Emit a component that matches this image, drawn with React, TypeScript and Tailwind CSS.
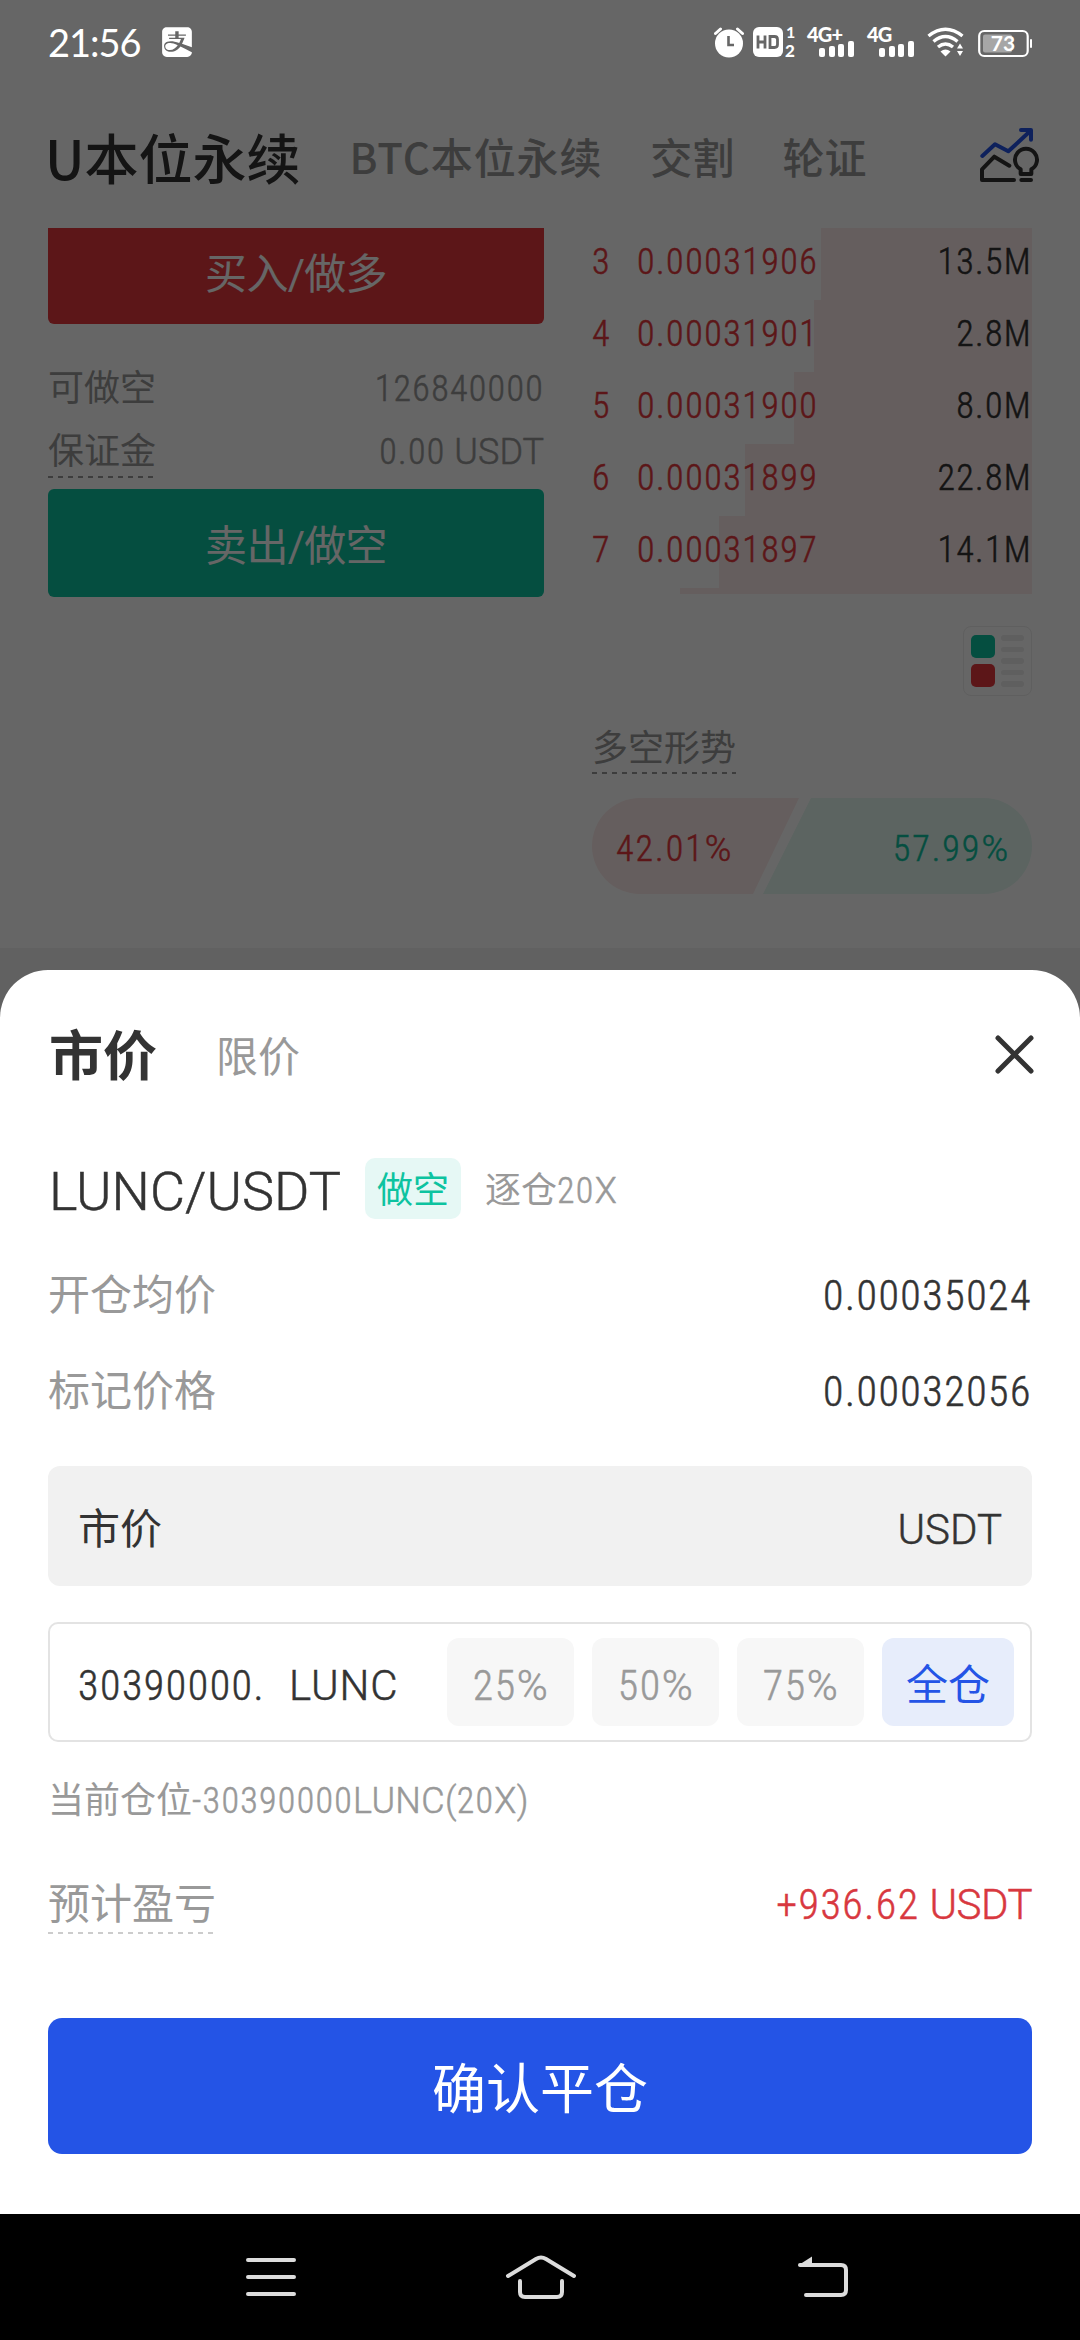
import type { ReactNode } from "react";
import { FaAlipay } from "react-icons/fa";

const asks = [
  { level: 3, price: "0.00031906", amount: "13.5M", depth: 211 },
  { level: 4, price: "0.00031901", amount: "2.8M", depth: 218 },
  { level: 5, price: "0.00031900", amount: "8.0M", depth: 238 },
  { level: 6, price: "0.00031899", amount: "22.8M", depth: 287 },
  { level: 7, price: "0.00031897", amount: "14.1M", depth: 313 },
];

const percents = ["25%", "50%", "75%"];

const latin = "font-light [-webkit-text-stroke:0.5px]";
const digits = "font-light [font-stretch:75%] tracking-[0.036em] [-webkit-text-stroke:0.5px]";

// narrow figures, normal width letters
function Num({ children }: { children: string }) {
  const runs = children.match(/[\d.+-]+|[^\d.+-]+/g) || [];
  return (
    <>
      {runs.map((run, i) => (
        <span key={i} className={/\d/.test(run) ? digits : latin}>{run}</span>
      ))}
    </>
  );
}

function DashedLabel({ children, line }: { children: ReactNode; line: string }) {
  return (
    <div className="flex flex-col">
      <span>{children}</span>
      <span className={`h-[2px] ${line}`} />
    </div>
  );
}

function SignalIcon({ label }: { label: string }) {
  return (
    <svg width="48" height="32" viewBox="0 0 48 32" fill="#fff" className="overflow-visible">
      <text x="0" y="15.5" fontSize="20" fontWeight="900" fontFamily="Lato" letterSpacing="-0.8">{label}</text>
      <rect x="12" y="22" width="6" height="9" rx="2" />
      <rect x="22" y="20" width="6" height="11" rx="2" />
      <rect x="31" y="18" width="6" height="13" rx="2" />
      <rect x="41" y="15" width="6" height="16" rx="2" />
    </svg>
  );
}

function StatusBar() {
  return (
    <div className="absolute inset-x-0 top-0 h-[84px] flex items-center justify-between pl-12 pr-[48px] text-white">
      <div className="flex items-center">
        <span className="w-[114px] font-[Lato] text-[38px] leading-[48px] tracking-[-1px]">21:56</span>
        <FaAlipay className="w-[30px] h-[34px]" />
      </div>
      <div className="flex items-center">
        <svg width="30" height="32" viewBox="0 0 30 32" className="mr-[9px]">
          <circle cx="15" cy="17.5" r="14" fill="#fff" />
          <path d="M1.5 7.5L6.5 3M28.5 7.5L23.5 3" stroke="#fff" strokeWidth="3" strokeLinecap="round" />
          <path d="M14.5 10V19H20" stroke="#666" strokeWidth="2.6" fill="none" />
        </svg>
        <svg width="44" height="32" viewBox="0 0 44 32" className="mr-[10px] overflow-visible">
          <rect x="0" y="1" width="30" height="30" rx="6" fill="#fff" />
          <path d="M5 9.5V22.5M12 9.5V22.5M5 16H12M17 10.5H21.5Q24.5 10.5 24.5 13.5V18.5Q24.5 21.5 21.5 21.5H17Z" stroke="#666" strokeWidth="2.8" fill="none" />
          <text x="33" y="12" fontSize="16" fontWeight="700" fontFamily="Lato" fill="#fff">1</text>
          <text x="32" y="31" fontSize="17" fontWeight="900" fontFamily="Lato" fill="#fff">2</text>
        </svg>
        <div className="mr-[12px] flex"><SignalIcon label="4G+" /></div>
        <div className="mr-[12px] flex"><SignalIcon label="4G" /></div>
        <svg width="38" height="32" viewBox="0 0 38 32" fill="none" stroke="#fff" strokeWidth="3.4" className="mr-[13px]">
          <path d="M1.5 10Q18.5 -3.5 35.5 10" />
          <path d="M6.5 15.5Q18.5 5.5 30.5 15.5" />
          <path d="M11 21Q18.5 15 26 21" />
          <path d="M13.5 25.5Q18.5 21.5 23.5 25.5L18.5 30.5Z" fill="#fff" stroke="none" />
          <path d="M30 22.5L33 17.5L36 22.5ZM30 25L33 30L36 25Z" fill="#fff" stroke="none" />
        </svg>
        <svg width="54" height="32" viewBox="0 0 54 32">
          <rect x="1.2" y="5" width="48.5" height="25" rx="5" fill="none" stroke="#fff" strokeWidth="2.2" />
          <rect x="5" y="8.5" width="29" height="18" rx="2" fill="#a6a6a6" />
          <rect x="52" y="13" width="2" height="9" rx="1" fill="#fff" />
          <text x="25" y="25" textAnchor="middle" fontSize="21" fontWeight="700" fontFamily="Lato" fill="#fff">73</text>
        </svg>
      </div>
    </div>
  );
}

function TrendIcon() {
  return (
    <svg width="64" height="58" viewBox="891 378 192 174" fill="none" strokeWidth="12" strokeLinecap="round" strokeLinejoin="round">
      <path d="M907 468L945 433L985 454L1050 394M1023 390H1053V419" stroke="#2454e6" />
      <path d="M988 497L943 470L906 508V540H1002M1024 540H1053" stroke="#333" />
      <path d="M1022 522V508A33 33 0 1 1 1054 508V522Z" stroke="#333" />
    </svg>
  );
}

function TradePage() {
  return (
    <div className="h-[2214px] bg-white">
      <div className="h-[228px] pt-[107px] pl-[45px] pr-[39px]">
        <div className="flex items-center h-[100px] gap-12 font-['Noto_Sans_CJK_SC',sans-serif] font-medium text-[42px] leading-[60px] text-[#999]">
          <span className="text-[54px] leading-[80px] text-[#333]">U本位永续</span>
          <span className="ml-[1px] mt-[-2px] tracking-[0.9px]">BTC本位永续</span>
          <span className="mt-[-2px]">交割</span>
          <span className="mt-[-2px]">轮证</span>
          <div className="ml-auto mt-[-5px]"><TrendIcon /></div>
        </div>
      </div>

      <div className="flex justify-between px-12 h-[720px]">
        <div className="w-[496px]">
          <div className="h-[96px] rounded-b-md bg-[#e6393e] text-white text-[42px] leading-[94px] tracking-[-0.7px] text-center">买入/做多</div>
          <div className="flex justify-between h-[63px] mt-[34px] text-[36px] leading-[63px] text-[#999]">
            <span>可做空</span>
            <span><Num>126840000</Num></span>
          </div>
          <div className="flex justify-between h-[68px] text-[36px] leading-[47px] text-[#999]">
            <div className="pt-[8px]">
              <DashedLabel line="bg-[repeating-linear-gradient(90deg,#999_0_5px,transparent_5px_10px)]">保证金</DashedLabel>
            </div>
            <span className="pt-[8px]"><Num>0.00 USDT</Num></span>
          </div>
          <div className="h-[108px] rounded-md bg-[#0dc3a0] text-white text-[42px] leading-[115px] tracking-[-0.7px] text-center">卖出/做空</div>
        </div>

        <div className="w-[440px]">
          {asks.map((ask) => (
            <div key={ask.level} className="relative h-[72px]">
              <div className="absolute right-0 top-0 h-[72px] bg-[#fdebea]" style={{ width: ask.depth }} />
              <div className={`relative flex text-[36px] leading-[68px] text-[#e6393e] ${digits}`}>
                <span className="w-[45px]">{ask.level}</span>
                <span className="tracking-[1.5px]">{ask.price}</span>
                <span className="ml-auto text-[#333]">{ask.amount}</span>
              </div>
            </div>
          ))}
          <div className="ml-auto w-[352px] h-[6px] bg-[#fdebea]" />

          <div className="ml-auto mt-[32px] w-[69px] h-[70px] rounded-lg border border-[#ededed] flex justify-between pl-[7px] pr-[7px] py-[8px]">
            <div className="flex flex-col gap-[6px]">
              <div className="w-[24px] h-[24px] rounded-[5px] bg-[#0dc3a0]" />
              <div className="w-[24px] h-[24px] rounded-[5px] bg-[#e6393e]" />
            </div>
            <div className="flex flex-col gap-[6px]">
              {[0, 1, 2, 3, 4].map((i) => (
                <div key={i} className="w-[23px] h-[6px] rounded-sm bg-[#ededed]" />
              ))}
            </div>
          </div>

          <div className="flex mt-[30px] h-[72px] text-[36px] leading-[46px] text-[#999]">
            <DashedLabel line="bg-[repeating-linear-gradient(90deg,#999_0_5px,transparent_5px_10px)]">
              多空形势
            </DashedLabel>
          </div>
          <div className="relative h-[96px] text-[36px] leading-[102px]">
            <svg className="absolute inset-0" width="440" height="96" viewBox="0 0 440 96">
              <path d="M48 0H207L161 96H48A48 48 0 0 1 48 0Z" fill="#fdebea" />
              <path d="M219 0H392A48 48 0 0 1 392 96H171Z" fill="#e6faf3" />
            </svg>
            <div className={`relative flex justify-between px-6 ${latin}`}>
              <span className="text-[#e6393e]"><span className="[font-stretch:75%] tracking-[2px]">42.01</span>%</span>
              <span className="text-[#0dc3a0]"><span className="[font-stretch:75%] tracking-[2px]">57.99</span>%</span>
            </div>
          </div>
        </div>
      </div>
      <div className="h-[60px] bg-[#f3f3f3]" />
    </div>
  );
}

function InfoRow({ label, value }: { label: string; value: string }) {
  return (
    <div className="flex justify-between h-[96px] text-[42px] leading-[98px]">
      <span className="text-[#999]">{label}</span>
      <span className="text-[#333]"><Num>{value}</Num></span>
    </div>
  );
}

function CloseSheet() {
  return (
    <div className="absolute inset-x-0 top-[970px] h-[1244px] rounded-t-[48px] bg-white px-12">
      <div className="flex items-center h-[176px]">
        <span className="ml-[1px] text-[54px] leading-[80px] font-bold text-[#333]">市价</span>
        <span className="ml-[59px] text-[42px] leading-[60px] text-[#999]">限价</span>
        <svg className="ml-auto mr-[-2px] mb-[7px]" width="39" height="39" viewBox="0 0 39 39" stroke="#333" strokeWidth="5" strokeLinecap="round">
          <path d="M3 3L36 36M36 3L3 36" />
        </svg>
      </div>

      <div className="flex items-center h-[92px]">
        <span className="ml-[1px] w-[293px] text-[54px] leading-[80px] text-[#333]"><Num>LUNC/USDT</Num></span>
        <span className="ml-[23px] mb-[8px] w-[96px] h-[61px] rounded-[10px] bg-[#e6f8f5] text-[36px] leading-[66px] text-center text-[#0dc3a0]">做空</span>
        <span className="ml-6 mb-[2px] text-[36px] leading-[60px] text-[#999]">
          逐仓<Num>20X</Num>
        </span>
      </div>

      <div className="mt-[9px]">
        <InfoRow label="开仓均价" value="0.00035024" />
        <InfoRow label="标记价格" value="0.00032056" />
      </div>

      <div className="flex justify-between mt-[27px] h-[120px] px-[30px] rounded-xl bg-[#f1f1f1] text-[42px] leading-[128px] text-[#333]">
        <span>市价</span>
        <span><Num>USDT</Num></span>
      </div>

      <div className="flex items-center mt-9 h-[120px] pl-[28px] pr-[16px] rounded-[10px] border-2 border-[#e3e3e3] text-[42px] leading-[88px] text-[#333]">
        <span className="w-[183px] overflow-hidden whitespace-nowrap pt-[7px]"><Num>30390000.</Num></span>
        <span className="ml-[28px] tracking-[0.9px] pt-[7px]"><Num>LUNC</Num></span>
        <div className="ml-auto flex gap-[18px] text-center">
          {percents.map((p) => (
            <div key={p} className="w-[127px] h-[88px] rounded-xl bg-[#f7f7f7] leading-[96px] tracking-[0.5px] text-[#999]"><Num>{p}</Num></div>
          ))}
          <div className="w-[132px] h-[88px] rounded-xl bg-[#e7edfb] leading-[96px] text-[#2454e6]">全仓</div>
        </div>
      </div>

      <div className="mt-[23px] h-[72px] text-[36px] leading-[72px] text-[#999]">
        当前仓位<span className="tracking-[0.3px]"><Num>-30390000LUNC(20X)</Num></span>
      </div>

      <div className="flex justify-between mt-[41px] h-[56px] text-[42px] leading-[54px]">
        <div className="text-[#999]">
          <DashedLabel line="bg-[repeating-linear-gradient(90deg,#ccc_0_5px,transparent_5px_10px)]">预计盈亏</DashedLabel>
        </div>
        <span className="tracking-[-0.5px] text-[#d8383f]"><Num>+936.62 USDT</Num></span>
      </div>

      <button className="mt-[84px] w-full h-[136px] rounded-[14px] bg-[#2454e6] pt-[9px] text-white text-[54px] leading-[127px]">确认平仓</button>
    </div>
  );
}

function NavBar() {
  return (
    <div className="relative flex items-center h-[126px] bg-black pl-[244px]">
      <svg width="54" height="44" viewBox="0 0 54 44" stroke="#dcdcdc" strokeWidth="4" strokeLinecap="round">
        <path d="M4 5H50M4 22H50M4 39H50" />
      </svg>
      <svg width="74" height="46" viewBox="0 0 74 46" fill="none" stroke="#dcdcdc" strokeWidth="4" strokeLinecap="round" strokeLinejoin="round" className="ml-[206px]">
        <path d="M4 22L32 5Q37 2 42 5L70 22" />
        <path d="M16 27V38Q16 43 21 43H53Q58 43 58 38V27" />
      </svg>
      <svg width="56" height="46" viewBox="0 0 56 46" fill="none" stroke="#dcdcdc" strokeWidth="4" strokeLinecap="round" className="ml-[217px]">
        <path d="M5 11H46Q51 11 51 16V36Q51 41 46 41H11" />
        <path d="M3 11.5L17 2.5V11.5Z" fill="#dcdcdc" stroke="none" />
      </svg>
    </div>
  );
}

export default function App() {
  return (
    <div className="relative w-[1080px] h-[2340px] overflow-hidden font-['Roboto','Noto_Sans_CJK_SC',sans-serif]">
      <TradePage />
      <div className="absolute inset-0 bg-black/60" />
      <StatusBar />
      <CloseSheet />
      <NavBar />
    </div>
  );
}
